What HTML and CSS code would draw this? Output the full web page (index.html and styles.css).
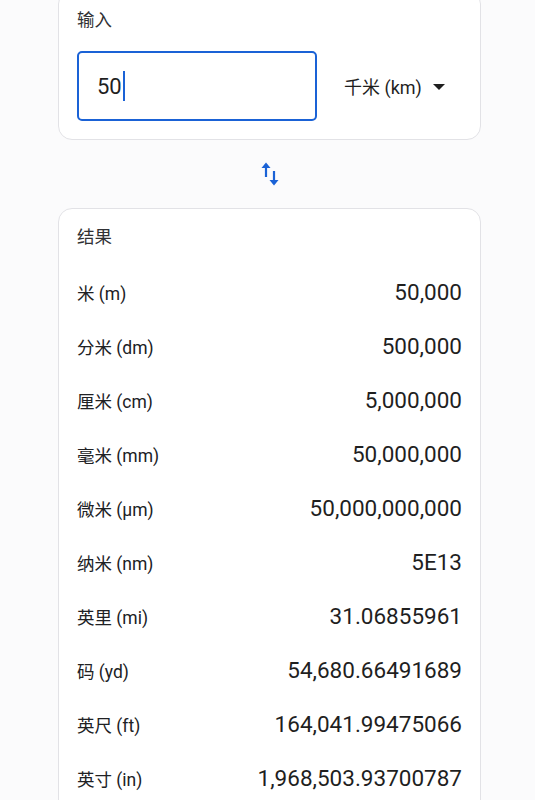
FILE: index.html
```html
<!DOCTYPE html>
<html lang="zh-CN">
<head>
  <meta charset="UTF-8">
  <meta name="viewport" content="width=device-width, initial-scale=1.0">
  <title>长度换算</title>
  <link rel="stylesheet" href="styles.css">
</head>
<body>
  <div class="page">
    <div class="card input-card">
      <div class="card-title">输入</div>
      <div class="input-row">
        <div class="value-box"><span>50</span><span class="caret"></span></div>
        <div class="unit-select">千米 (km)<span class="arrow"></span></div>
      </div>
    </div>

    <div class="swap">
      <svg width="20" height="26" viewBox="0 0 20 26">
        <path d="M6 16V3" stroke="#1a62d6" stroke-width="2.2" fill="none"/>
        <path d="M1.5 7L6 1.5 10.5 7z" fill="#1a62d6"/>
        <path d="M14 10v13" stroke="#1a62d6" stroke-width="2.2" fill="none"/>
        <path d="M9.5 19L14 24.5 18.5 19z" fill="#1a62d6"/>
      </svg>
    </div>

    <div class="card result-card">
      <div class="card-title">结果</div>
      <div class="rows">
        <div class="row"><span class="unit">米 (m)</span><span class="num">50,000</span></div>
        <div class="row"><span class="unit">分米 (dm)</span><span class="num">500,000</span></div>
        <div class="row"><span class="unit">厘米 (cm)</span><span class="num">5,000,000</span></div>
        <div class="row"><span class="unit">毫米 (mm)</span><span class="num">50,000,000</span></div>
        <div class="row"><span class="unit">微米 (µm)</span><span class="num">50,000,000,000</span></div>
        <div class="row"><span class="unit">纳米 (nm)</span><span class="num">5E13</span></div>
        <div class="row"><span class="unit">英里 (mi)</span><span class="num">31.06855961</span></div>
        <div class="row"><span class="unit">码 (yd)</span><span class="num">54,680.66491689</span></div>
        <div class="row"><span class="unit">英尺 (ft)</span><span class="num">164,041.99475066</span></div>
        <div class="row"><span class="unit">英寸 (in)</span><span class="num">1,968,503.93700787</span></div>
      </div>
    </div>
  </div>
</body>
</html>
```

FILE: styles.css
```css
body {
  margin: 0;
  background: #fbfbfc;
  color: #202124;
  font-family: Roboto, "Noto Sans CJK SC", sans-serif;
  overflow: hidden;
}
.page {
  padding: 0 54px 0 58px;
}
.card {
  background: #fff;
  border: 1px solid #e2e2e6;
  border-radius: 14px;
  padding: 18px;
}
.card-title {
  font-size: 17.5px;
  line-height: 22px;
  color: #303134;
}
.input-card {
  margin-top: -10px;
}
.input-card .card-title {
  margin-bottom: 20px;
}
.input-row {
  display: flex;
  align-items: center;
}
.value-box {
  box-sizing: border-box;
  width: 240px;
  height: 70px;
  border: 2px solid #1a62d6;
  border-radius: 5px;
  padding-left: 18px;
  display: flex;
  align-items: center;
  font-size: 22px;
  color: #1f1f1f;
}
.caret {
  display: inline-block;
  width: 2px;
  height: 30px;
  background: #1a62d6;
  margin-left: 1px;
}
.unit-select {
  margin-left: 27px;
  font-size: 18px;
  color: #1f1f1f;
  display: flex;
  align-items: center;
}
.arrow {
  width: 0;
  height: 0;
  border-left: 6px solid transparent;
  border-right: 6px solid transparent;
  border-top: 6px solid #1f1f1f;
  margin-left: 11px;
  margin-top: 2px;
}
.swap {
  height: 68px;
  display: flex;
  align-items: center;
  justify-content: center;
}
.result-card {
  padding-top: 17px;
  padding-bottom: 40px;
}
.rows {
  margin-top: 14px;
}
.row {
  display: flex;
  justify-content: space-between;
  align-items: baseline;
  height: 54px;
  line-height: 54px;
}
.unit {
  font-size: 17.5px;
  color: #202124;
}
.num {
  font-size: 22.5px;
  color: #1f1f1f;
  padding-top: 3px;
}
```
